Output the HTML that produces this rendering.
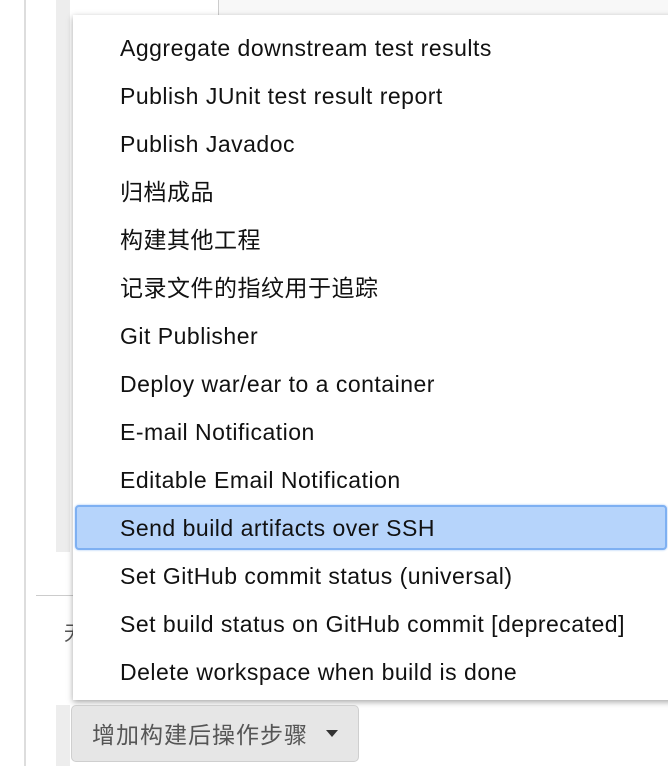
<!DOCTYPE html>
<html><head><meta charset="utf-8"><style>
body{margin:0;width:668px;height:766px;overflow:hidden;background:#fff;position:relative;font-family:"Liberation Sans","Noto Sans CJK SC",sans-serif}
.a{position:absolute}
.menu{left:73px;top:15px;width:620px;height:685px;background:#fff;box-shadow:0 2px 6px rgba(0,0,0,.35);}
.it{position:absolute;left:47px;font-size:23px;letter-spacing:0.5px;color:#111;line-height:48px;white-space:nowrap}
.hl{left:2px;top:490px;width:588px;height:41px;background:#b6d4fb;border:2px solid #7eb0f2;border-radius:4px;box-shadow:0 0 2px #9cc3f5}
</style></head><body>
<div class="a" style="left:24px;top:0;width:2px;height:766px;background:#ddd"></div>
<div class="a" style="left:56px;top:0;width:14px;height:552px;background:#ededed"></div>
<div class="a" style="left:56px;top:705px;width:14px;height:61px;background:#ededed"></div>
<div class="a" style="left:36px;top:595px;width:40px;height:1px;background:#ccc"></div>
<div class="a" style="left:64px;top:617px;font-size:20px;color:#555">无</div>
<div class="a" style="left:218px;top:0;width:460px;height:16px;border-left:1px solid #ccc;border-bottom:1px solid #ccc;background:#f8f8f8"></div>
<div class="a menu">
<div class="a hl"></div>
<div class="it" style="top:9px">Aggregate downstream test results</div>
<div class="it" style="top:57px">Publish JUnit test result report</div>
<div class="it" style="top:105px">Publish Javadoc</div>
<div class="it" style="top:153px">归档成品</div>
<div class="it" style="top:201px">构建其他工程</div>
<div class="it" style="top:249px">记录文件的指纹用于追踪</div>
<div class="it" style="top:297px">Git Publisher</div>
<div class="it" style="top:345px">Deploy war/ear to a container</div>
<div class="it" style="top:393px">E-mail Notification</div>
<div class="it" style="top:441px">Editable Email Notification</div>
<div class="it" style="top:489px">Send build artifacts over SSH</div>
<div class="it" style="top:537px">Set GitHub commit status (universal)</div>
<div class="it" style="top:585px">Set build status on GitHub commit [deprecated]</div>
<div class="it" style="top:633px">Delete workspace when build is done</div>
</div>
<div class="a" style="left:71px;top:705px;width:286px;height:55px;background:#e6e6e6;border:1px solid #cfcfcf;border-radius:5px"></div>
<div class="a" style="left:92px;top:716px;font-size:23px;letter-spacing:1px;color:#555;white-space:nowrap">增加构建后操作步骤</div>
<div class="a" style="left:326px;top:730px;width:0;height:0;border-left:6px solid transparent;border-right:6px solid transparent;border-top:7px solid #333"></div>
</body></html>
